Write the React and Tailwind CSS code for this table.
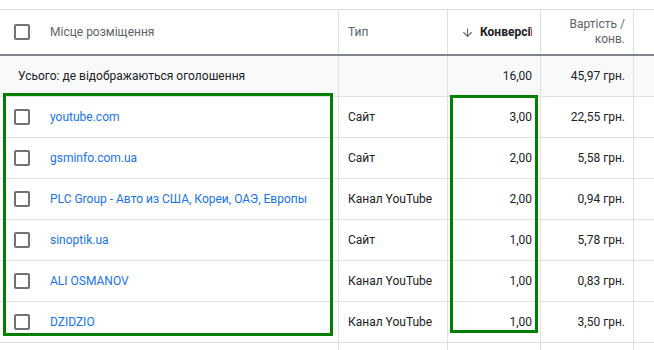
import React from 'react';
import { ArrowDown } from 'lucide-react';

const rows = [
  { place: 'youtube.com', type: 'Сайт', conv: '3,00', cost: '22,55 грн.' },
  { place: 'gsminfo.com.ua', type: 'Сайт', conv: '2,00', cost: '5,58 грн.' },
  { place: 'PLC Group - Авто из США, Кореи, ОАЭ, Европы', type: 'Канал YouTube', conv: '2,00', cost: '0,94 грн.' },
  { place: 'sinoptik.ua', type: 'Сайт', conv: '1,00', cost: '5,78 грн.' },
  { place: 'ALI OSMANOV', type: 'Канал YouTube', conv: '1,00', cost: '0,83 грн.' },
  { place: 'DZIDZIO', type: 'Канал YouTube', conv: '1,00', cost: '3,50 грн.' },
];

const Checkbox = () => (
  <div className="w-4 h-4 shrink-0 rounded-[2px] border-2 border-[#6f7378]" />
);

const App = () => {
  return (
    <div className="relative w-[654px] h-[350px] overflow-hidden bg-white font-['Roboto','Liberation_Sans',sans-serif] text-[12px] text-[#3c4043]">
      <div className="h-[9px]" />

      {/* header */}
      <div className="flex h-[47px] border-t border-b-2 border-t-[#e0e0e0] border-b-[#80868b] text-[#5f6368]">
        <div className="w-[338px] flex items-center pl-[14px] gap-5">
          <Checkbox />
          <span>Місце розміщення</span>
        </div>
        <div className="w-[109px] border-l border-[#e0e0e0] flex items-center pl-[9px]">Тип</div>
        <div className="w-[93px] border-l border-[#e0e0e0] flex items-center justify-end pr-2 gap-[6px]">
          <ArrowDown size={13} strokeWidth={2} className="text-[#5f6368]" />
          <span className="w-[52px] overflow-hidden whitespace-nowrap font-bold text-[#202124]">Конверсії</span>
        </div>
        <div className="w-[93px] border-l border-[#e0e0e0] flex flex-col justify-center items-end pr-2 leading-[15px] text-right">
          <span>Вартість /</span>
          <span>конв.</span>
        </div>
        <div className="flex-1 border-l border-[#e0e0e0]" />
      </div>

      {/* totals */}
      <div className="flex h-[41px] bg-[#f8f9fa] border-b border-[#e0e0e0] text-[#202124]">
        <div className="w-[338px] flex items-center pl-[18px]">Усього: де відображаються оголошення</div>
        <div className="w-[109px] border-l border-[#e0e0e0]" />
        <div className="w-[93px] border-l border-[#e0e0e0] flex items-center justify-end pr-2">16,00</div>
        <div className="w-[93px] border-l border-[#e0e0e0] flex items-center justify-end pr-2">45,97 грн.</div>
        <div className="flex-1 border-l border-[#e0e0e0]" />
      </div>

      {rows.map((r) => (
        <div key={r.place} className="flex h-[41px] border-b border-[#e0e0e0]">
          <div className="w-[338px] flex items-center pl-[14px] gap-5">
            <Checkbox />
            <span className="text-[#1a73e8] whitespace-nowrap">{r.place}</span>
          </div>
          <div className="w-[109px] border-l border-[#e0e0e0] flex items-center pl-[9px] text-[#202124]">{r.type}</div>
          <div className="w-[93px] border-l border-[#e0e0e0] flex items-center justify-end pr-2 text-[#202124]">{r.conv}</div>
          <div className="w-[93px] border-l border-[#e0e0e0] flex items-center justify-end pr-2 text-[#202124]">{r.cost}</div>
          <div className="flex-1 border-l border-[#e0e0e0]" />
        </div>
      ))}

      <div className="flex h-[41px]">
        <div className="w-[338px]" />
        <div className="w-[109px] border-l border-[#e0e0e0]" />
        <div className="w-[93px] border-l border-[#e0e0e0]" />
        <div className="w-[93px] border-l border-[#e0e0e0]" />
        <div className="flex-1 border-l border-[#e0e0e0]" />
      </div>

      {/* highlight frames */}
      <div className="absolute left-[3px] top-[93px] w-[330px] h-[243px] border-[3px] border-[#008000]" />
      <div className="absolute left-[450px] top-[95px] w-[88px] h-[238px] border-[3px] border-[#008000]" />
    </div>
  );
};

export default App;
